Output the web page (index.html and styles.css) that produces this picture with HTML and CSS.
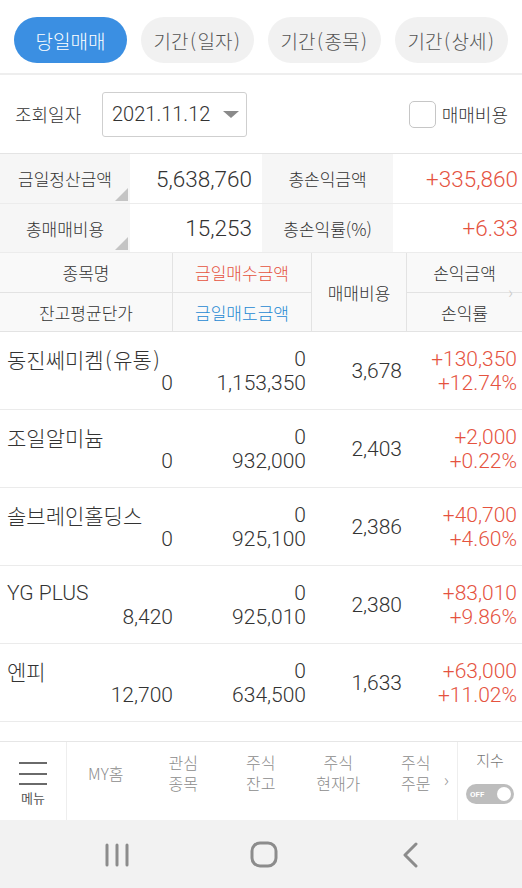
FILE: index.html
```html
<!DOCTYPE html>
<html lang="ko">
<head>
<meta charset="utf-8">
<title>당일매매</title>
<link rel="stylesheet" href="styles.css">
</head>
<body>
<div class="app">
  <nav class="tabs">
    <button class="tab active">당일매매</button>
    <button class="tab">기간<span class="p">(</span>일자<span class="p">)</span></button>
    <button class="tab">기간<span class="p">(</span>종목<span class="p">)</span></button>
    <button class="tab">기간<span class="p">(</span>상세<span class="p">)</span></button>
  </nav>

  <div class="filter">
    <span class="filter-label">조회일자</span>
    <div class="select"><span>2021.11.12</span><span class="caret"></span></div>
    <label class="check"><span class="box"></span><span>매매비용</span></label>
  </div>

  <div class="summary">
    <div class="s-label corner">금일정산금액</div>
    <div class="s-value v2">5,638,760</div>
    <div class="s-label">총손익금액</div>
    <div class="s-value up">+335,860</div>
    <div class="s-label corner">총매매비용</div>
    <div class="s-value v2">15,253</div>
    <div class="s-label">총손익률(%)</div>
    <div class="s-value up">+6.33</div>
  </div>

  <div class="thead">
    <div class="th">종목명</div>
    <div class="th up">금일매수금액</div>
    <div class="th span">매매비용</div>
    <div class="th last">손익금액</div>
    <div class="th">잔고평균단가</div>
    <div class="th down">금일매도금액</div>
    <div class="th last">손익률</div>
    <span class="more">›</span>
  </div>

  <div class="list">
    <ul class="rows">
      <li class="row">
        <div class="cell col1"><span class="name">동진쎄미켐<span class="p">(</span>유통<span class="p">)</span></span><span class="num">0</span></div>
        <div class="cell col2"><span>0</span><span>1,153,350</span></div>
        <div class="cell col3">3,678</div>
        <div class="cell col4 up"><span>+130,350</span><span>+12.74%</span></div>
      </li>
      <li class="row">
        <div class="cell col1"><span class="name">조일알미늄</span><span class="num">0</span></div>
        <div class="cell col2"><span>0</span><span>932,000</span></div>
        <div class="cell col3">2,403</div>
        <div class="cell col4 up"><span>+2,000</span><span>+0.22%</span></div>
      </li>
      <li class="row">
        <div class="cell col1"><span class="name">솔브레인홀딩스</span><span class="num">0</span></div>
        <div class="cell col2"><span>0</span><span>925,100</span></div>
        <div class="cell col3">2,386</div>
        <div class="cell col4 up"><span>+40,700</span><span>+4.60%</span></div>
      </li>
      <li class="row">
        <div class="cell col1"><span class="name latin">YG PLUS</span><span class="num">8,420</span></div>
        <div class="cell col2"><span>0</span><span>925,010</span></div>
        <div class="cell col3">2,380</div>
        <div class="cell col4 up"><span>+83,010</span><span>+9.86%</span></div>
      </li>
      <li class="row">
        <div class="cell col1"><span class="name">엔피</span><span class="num">12,700</span></div>
        <div class="cell col2"><span>0</span><span>634,500</span></div>
        <div class="cell col3">1,633</div>
        <div class="cell col4 up"><span>+63,000</span><span>+11.02%</span></div>
      </li>
    </ul>
  </div>

  <footer class="menubar">
    <div class="menu-btn">
      <span class="burger"><i></i><i></i><i></i></span>
      <span class="menu-text">메뉴</span>
    </div>
    <div class="quick">
      <a class="q"><span>MY홈</span></a>
      <a class="q"><span>관심</span><span>종목</span></a>
      <a class="q"><span>주식</span><span>잔고</span></a>
      <a class="q"><span>주식</span><span>현재가</span></a>
      <a class="q"><span>주식</span><span>주문</span></a>
      <span class="q-more">›</span>
    </div>
    <div class="index">
      <span class="index-label">지수</span>
      <span class="toggle"><b>OFF</b><i></i></span>
    </div>
  </footer>

  <div class="sysbar">
    <span class="sys">
      <svg width="26" height="26" viewBox="0 0 26 26"><g stroke="#8c8c8c" stroke-width="3" stroke-linecap="round"><line x1="3" y1="3" x2="3" y2="23"/><line x1="13" y1="3" x2="13" y2="23"/><line x1="23" y1="3" x2="23" y2="23"/></g></svg>
    </span>
    <span class="sys">
      <svg width="28" height="28" viewBox="0 0 28 28"><rect x="2" y="2" width="24" height="23" rx="8" ry="8" fill="none" stroke="#8c8c8c" stroke-width="3"/></svg>
    </span>
    <span class="sys">
      <svg width="26" height="26" viewBox="0 0 26 26"><polyline points="18,2 7,13 18,24" fill="none" stroke="#8c8c8c" stroke-width="3" stroke-linecap="round" stroke-linejoin="round"/></svg>
    </span>
  </div>
</div>
</body>
</html>
```

FILE: styles.css
```css
* {
  box-sizing: border-box;
  margin: 0;
  padding: 0;
}

html, body {
  background: #ffffff;
}

body {
  width: 522px;
  height: 888px;
  overflow: hidden;
  font-family: Roboto, "Noto Sans CJK KR", sans-serif;
  font-weight: 300;
  color: #333333;
}

.app {
  display: flex;
  flex-direction: column;
  height: 888px;
}

.p {
  margin: 0 1.5px;
}

/* tabs */
.tabs {
  display: flex;
  gap: 14px;
  height: 75px;
  padding: 17px 0 0 14px;
  border-bottom: 2px solid #eeeeee;
}

.tab {
  width: 113px;
  height: 46px;
  border: 0;
  border-radius: 23px;
  background: #f1f1f1;
  color: #555555;
  font-family: "Noto Sans CJK KR", sans-serif;
  font-size: 19px;
  font-weight: 300;
}

.tab.active {
  background: #3b8fe2;
  color: #ffffff;
}

/* filter */
.filter {
  display: flex;
  align-items: center;
  height: 79px;
  padding: 0 14px 0 15px;
  border-bottom: 1px solid #e4e4e4;
}

.filter-label {
  width: 87px;
  font-family: "Noto Sans CJK KR", sans-serif;
  font-size: 18px;
  font-weight: 300;
  color: #333333;
}

.select {
  display: flex;
  align-items: center;
  width: 145px;
  height: 45px;
  padding: 0 7px 0 9px;
  border: 1px solid #cfcfcf;
  border-radius: 3px;
  font-size: 20px;
  color: #333333;
}

.caret {
  margin-left: auto;
  width: 0;
  height: 0;
  border-left: 8px solid transparent;
  border-right: 8px solid transparent;
  border-top: 7px solid #8a8a8a;
}

.check {
  display: flex;
  align-items: center;
  margin-left: auto;
  font-family: "Noto Sans CJK KR", sans-serif;
  font-size: 18px;
  font-weight: 300;
  color: #333333;
}

.box {
  width: 27px;
  height: 27px;
  margin-right: 6px;
  border: 1.5px solid #c6c6c6;
  border-radius: 5px;
}

/* summary */
.summary {
  display: grid;
  grid-template-columns: 130px 132px 131px 1fr;
  grid-template-rows: 50px 49px;
}

.s-label {
  position: relative;
  display: flex;
  align-items: center;
  justify-content: center;
  background: #f6f6f6;
  border-bottom: 1px solid #ececec;
  font-family: "Noto Sans CJK KR", sans-serif;
  font-size: 17px;
  font-weight: 300;
  color: #333333;
}

.s-label.corner::after {
  content: "";
  position: absolute;
  right: 2px;
  bottom: 2px;
  width: 0;
  height: 0;
  border-left: 13px solid transparent;
  border-bottom: 13px solid #c4c4c4;
}

.s-value {
  display: flex;
  align-items: center;
  justify-content: flex-end;
  padding-right: 4px;
  border-bottom: 1px solid #ececec;
  font-size: 22.5px;
  color: #333333;
}

.s-value.v2 {
  padding-right: 10px;
}

.up {
  color: #e5533f !important;
}

.down {
  color: #2689d3 !important;
}

/* table head */
.thead {
  position: relative;
  display: grid;
  grid-template-columns: 173px 139px 95px 1fr;
  grid-template-rows: 40px 39px;
  background: #f9f9f9;
}

.th {
  display: flex;
  align-items: center;
  justify-content: center;
  border-right: 1px solid #e3e3e3;
  border-bottom: 1px solid #e3e3e3;
  font-family: "Noto Sans CJK KR", sans-serif;
  font-size: 17px;
  font-weight: 300;
  color: #333333;
}

.th.span {
  grid-row: span 2;
}

.th.last {
  border-right: 0;
}

.more {
  position: absolute;
  right: 9px;
  top: 32px;
  font-size: 16px;
  line-height: 16px;
  color: #c8c8c8;
}

/* list */
.list {
  flex: 1;
}

.rows {
  list-style: none;
}

.row {
  display: grid;
  grid-template-columns: 173px 139px 95px 1fr;
  height: 78px;
  border-bottom: 1px solid #ebebeb;
  align-items: center;
  font-size: 21px;
  line-height: 24px;
  color: #333333;
}

.cell {
  display: flex;
  flex-direction: column;
  align-items: flex-end;
}

.col1 {
  padding: 0 0 0 7px;
}

.col1 .name {
  align-self: flex-start;
  white-space: nowrap;
  font-family: "Noto Sans CJK KR", sans-serif;
  font-size: 21px;
  font-weight: 300;
}

.col1 .name.latin {
  font-family: Roboto, sans-serif;
  font-size: 21px;
}

.col2 {
  padding-right: 6px;
}

.col3 {
  padding-right: 5px;
}

.col4 {
  padding-right: 5px;
}

/* bottom menu */
.menubar {
  display: flex;
  height: 79px;
  border-top: 1px solid #e6e6e6;
  font-family: "Noto Sans CJK KR", sans-serif;
}

.menu-btn {
  display: flex;
  flex-direction: column;
  align-items: center;
  width: 67px;
  padding-top: 20px;
  border-right: 1px solid #eeeeee;
}

.burger {
  display: flex;
  flex-direction: column;
  gap: 8.5px;
  width: 28px;
}

.burger i {
  display: block;
  height: 2px;
  background: #6a6a6a;
}

.menu-text {
  margin-top: 6px;
  font-size: 13px;
  font-weight: 400;
  line-height: 14px;
  color: #555555;
}

.quick {
  position: relative;
  display: flex;
  width: 390px;
}

.q {
  display: flex;
  flex-direction: column;
  align-items: center;
  justify-content: center;
  width: 77.5px;
  padding-bottom: 16px;
  text-align: center;
  font-size: 16px;
  font-weight: 300;
  line-height: 21px;
  color: #8c8c8c;
}

.q span {
  display: block;
  height: 21px;
}

.q-more {
  position: absolute;
  right: 8px;
  top: 28px;
  font-size: 18px;
  line-height: 18px;
  color: #9a9a9a;
}

.index {
  display: flex;
  flex-direction: column;
  align-items: center;
  flex: 1;
  padding-top: 8px;
  border-left: 1px solid #eeeeee;
}

.index-label {
  font-size: 15px;
  line-height: 20px;
  color: #777777;
}

.toggle {
  display: flex;
  align-items: center;
  justify-content: space-between;
  width: 48px;
  height: 20px;
  margin-top: 14px;
  padding: 0 3px 0 4px;
  border-radius: 10px;
  background: #bdbdbd;
}

.toggle b {
  font-family: Roboto, sans-serif;
  font-size: 8px;
  font-weight: 700;
  color: #ffffff;
}

.toggle i {
  width: 14px;
  height: 14px;
  border-radius: 50%;
  background: #ffffff;
}

/* system bar */
.sysbar {
  display: flex;
  justify-content: center;
  align-items: center;
  height: 68px;
  padding: 2px 0 0 6px;
  background: #f2f2f2;
}

.sys {
  display: flex;
  justify-content: center;
  width: 147px;
}
```
